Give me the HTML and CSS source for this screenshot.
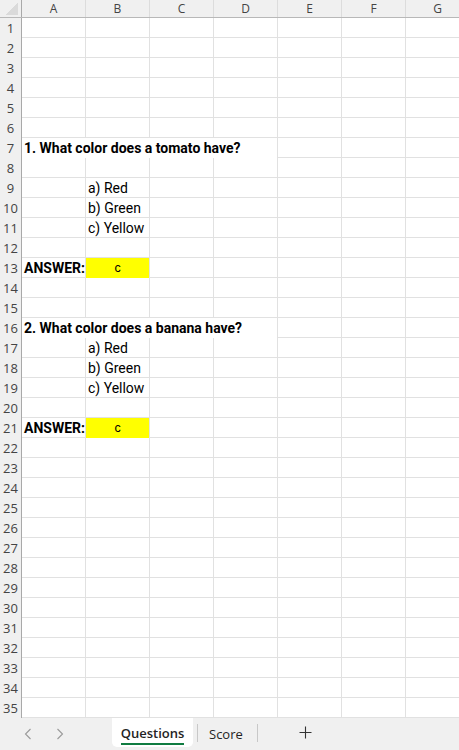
FILE: index.html
```html
<!DOCTYPE html>
<html>
<head>
<meta charset="utf-8">
<link rel="stylesheet" href="styles.css">
</head>
<body>
<div class="app">
  <div class="sheet">
    <div class="row head">
      <div class="corner"><span class="tri"></span></div>
      <div class="ch">A</div><div class="ch">B</div><div class="ch">C</div><div class="ch">D</div><div class="ch">E</div><div class="ch">F</div><div class="ch">G</div>
    </div>
    <div class="row"><div class="rh">1</div></div>
    <div class="row"><div class="rh">2</div></div>
    <div class="row"><div class="rh">3</div></div>
    <div class="row"><div class="rh">4</div></div>
    <div class="row"><div class="rh">5</div></div>
    <div class="row"><div class="rh">6</div></div>
    <div class="row"><div class="rh">7</div><div class="cell q">1. What color does a tomato have?</div></div>
    <div class="row"><div class="rh">8</div></div>
    <div class="row"><div class="rh">9</div><div class="cell opt">a) Red</div></div>
    <div class="row"><div class="rh">10</div><div class="cell opt">b) Green</div></div>
    <div class="row"><div class="rh">11</div><div class="cell opt">c) Yellow</div></div>
    <div class="row"><div class="rh">12</div></div>
    <div class="row"><div class="rh">13</div><div class="cell lbl">ANSWER:</div><div class="cell ans">c</div></div>
    <div class="row"><div class="rh">14</div></div>
    <div class="row"><div class="rh">15</div></div>
    <div class="row"><div class="rh">16</div><div class="cell q">2. What color does a banana have?</div></div>
    <div class="row"><div class="rh">17</div><div class="cell opt">a) Red</div></div>
    <div class="row"><div class="rh">18</div><div class="cell opt">b) Green</div></div>
    <div class="row"><div class="rh">19</div><div class="cell opt">c) Yellow</div></div>
    <div class="row"><div class="rh">20</div></div>
    <div class="row"><div class="rh">21</div><div class="cell lbl">ANSWER:</div><div class="cell ans">c</div></div>
    <div class="row"><div class="rh">22</div></div>
    <div class="row"><div class="rh">23</div></div>
    <div class="row"><div class="rh">24</div></div>
    <div class="row"><div class="rh">25</div></div>
    <div class="row"><div class="rh">26</div></div>
    <div class="row"><div class="rh">27</div></div>
    <div class="row"><div class="rh">28</div></div>
    <div class="row"><div class="rh">29</div></div>
    <div class="row"><div class="rh">30</div></div>
    <div class="row"><div class="rh">31</div></div>
    <div class="row"><div class="rh">32</div></div>
    <div class="row"><div class="rh">33</div></div>
    <div class="row"><div class="rh">34</div></div>
    <div class="row"><div class="rh">35</div></div>
  </div>
  <div class="tabbar">
    <div class="nav">
      <svg class="arrow" width="8" height="12" viewBox="0 0 8 12"><path d="M6.5 1 L1.5 6 L6.5 11" fill="none" stroke="#9a9a9a" stroke-width="1.1"/></svg>
      <svg class="arrow" width="8" height="12" viewBox="0 0 8 12"><path d="M1.5 1 L6.5 6 L1.5 11" fill="none" stroke="#9a9a9a" stroke-width="1.1"/></svg>
    </div>
    <div class="tab active"><span class="tabtext">Questions</span></div>
    <div class="sep first"></div>
    <div class="tab score"><span class="tabtext">Score</span></div>
    <div class="sep"></div>
    <div class="add">
      <svg width="13" height="13" viewBox="0 0 13 13"><path d="M6.5 0.5 V12.5 M0.5 6.5 H12.5" stroke="#333" stroke-width="1.1"/></svg>
    </div>
  </div>
</div>
</body>
</html>
```

FILE: styles.css
```css
* { box-sizing: border-box; }
html, body { margin: 0; padding: 0; }
body {
  width: 459px;
  height: 750px;
  overflow: hidden;
  background: #fff;
  font-family: Roboto, "Liberation Sans", sans-serif;
}
.app {
  width: 459px;
  height: 750px;
  display: flex;
  flex-direction: column;
  overflow: hidden;
}
.sheet {
  width: 459px;
  overflow: hidden;
  flex: none;
}
.row {
  display: grid;
  grid-template-columns: 22px repeat(7, 64px);
  height: 20px;
  border-bottom: 1px solid #e1e1e1;
  background-image: linear-gradient(to right, transparent 63px, #e1e1e1 63px);
  background-size: 64px 100%;
  background-position: 22px 0;
  background-repeat: repeat-x;
}
.row.head {
  height: 18px;
  background-color: #f0f0f0;
  border-bottom: 1px solid #b8b8b8;
}
.corner {
  grid-column: 1;
  background: #f0f0f0;
  border-right: 1px solid #a9a9a9;
  display: flex;
  justify-content: flex-end;
  align-items: flex-end;
  padding: 0 3px 2px 0;
}
.tri {
  width: 13px;
  height: 12px;
  background: linear-gradient(to bottom right, transparent 50%, #dadada 50%);
}
.ch {
  font-family: "Open Sans", "Noto Sans", sans-serif;
  font-size: 12px;
  color: #444;
  text-align: center;
  line-height: 17px;
  border-right: 1px solid #dcdcdc;
}
.rh {
  grid-column: 1;
  background: #f0f0f0;
  border-right: 1px solid #a9a9a9;
  font-family: "Open Sans", "Noto Sans", sans-serif;
  font-size: 13px;
  color: #444;
  text-align: center;
  line-height: 20px;
}
.cell {
  font-size: 14px;
  line-height: 17px;
  padding-top: 2px;
  color: #000;
  white-space: nowrap;
  padding-left: 2px;
}
.q {
  grid-column: 2 / 6;
  margin-right: 1px;
  background: #fff;
  font-weight: bold;
}
.opt { grid-column: 3; }
.lbl { grid-column: 2; font-weight: bold; }
.ans {
  grid-column: 3;
  margin-right: 1px;
  background: #ffff00;
  font-family: "Liberation Sans", Arial, sans-serif;
  font-size: 12.5px;
  text-align: center;
  padding-left: 0;
}
.tabbar {
  flex: 1;
  background: #f0f0f0;
  display: flex;
  align-items: stretch;
  font-family: "Open Sans", "Noto Sans", sans-serif;
}
.nav {
  width: 112px;
  display: flex;
  align-items: center;
  gap: 24px;
  padding-left: 24px;
}
.tab {
  display: flex;
  align-items: center;
  font-size: 13px;
  color: #242424;
}
.tab.score {
  padding: 0 14px 1px 11px;
}
.tab.active {
  width: 81px;
  justify-content: center;
  padding: 0;
  background: #fff;
  border-radius: 0 0 5px 5px;
  margin-bottom: 3px;
  font-weight: 600;
}
.tab.active .tabtext {
  border-bottom: 2px solid #107c41;
  line-height: 19px;
  padding-top: 3px;
}
.sep {
  width: 1px;
  background: #c8c8c8;
  margin: 6px 0 8px 0;
}
.sep.first { margin-left: 4px; }
.add {
  display: flex;
  align-items: center;
  padding-left: 41px;
  padding-bottom: 3px;
}
```
